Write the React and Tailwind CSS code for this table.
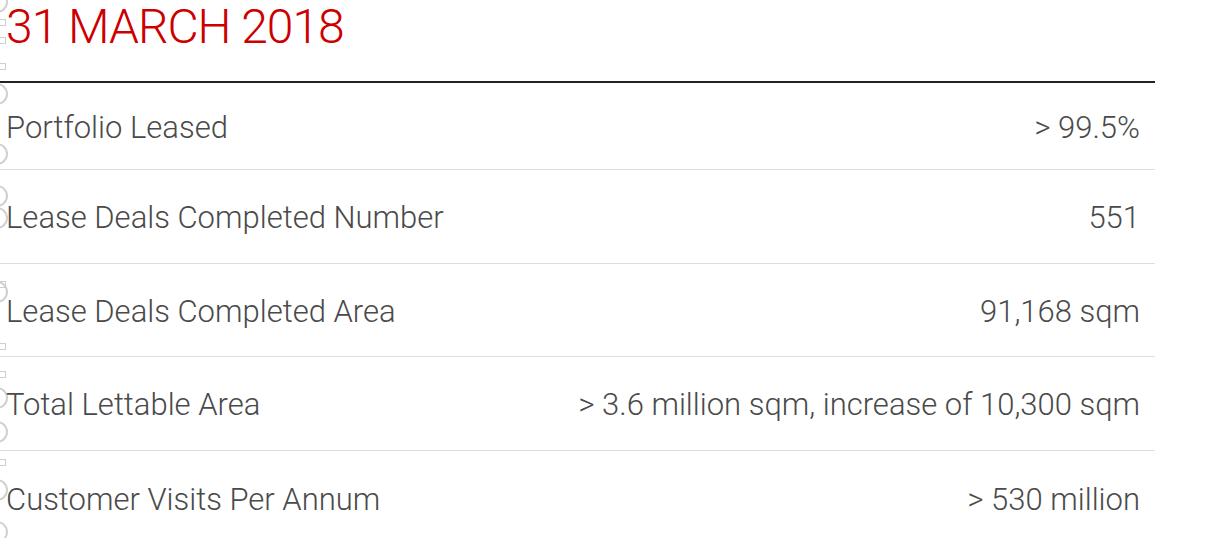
const ROWS = [
  { label: 'Portfolio Leased', value: '> 99.5%', h: 'h-[87px]' },
  { label: 'Lease Deals Completed Number', value: '551', h: 'h-[94px]' },
  { label: 'Lease Deals Completed Area', value: '91,168 sqm', h: 'h-[93px]' },
  { label: 'Total Lettable Area', value: '> 3.6 million sqm, increase of 10,300 sqm', h: 'h-[94px]' },
  { label: 'Customer Visits Per Annum', value: '> 530 million', h: 'h-[94px]' },
];

// restos de controles de formulario que asoman por el borde izquierdo
const GHOST_CIRCLES = [2, 94, 154, 196, 218, 292, 398, 432, 490, 532];
const GHOST_SQUARES = [22, 40, 66, 284, 346, 374, 462];

export default function App() {
  return (
    <div className="relative w-[1213px] h-[538px] overflow-hidden bg-white font-['Roboto',sans-serif]">
      {GHOST_CIRCLES.map(y => (
        <div
          key={'c' + y}
          className="absolute left-[-14px] w-[22px] h-[22px] rounded-full border-2 border-[#d0d0d0]"
          style={{ top: y - 11 }}
        />
      ))}
      {GHOST_SQUARES.map(y => (
        <div
          key={'s' + y}
          className="absolute left-[-2px] w-[8px] h-[7px] border border-[#cfcfcf]"
          style={{ top: y - 3 }}
        />
      ))}

      <div className="relative w-[1155px]">
        <h1 className="h-[81px] pl-[6px] pt-[2px] text-[48px] leading-[50px] font-light text-[#cc0000] tracking-[-1px]">
          31 MARCH 2018
        </h1>
        <div className="h-[2px] bg-[#222]" />
        {ROWS.map((row, i) => (
          <div
            key={row.label}
            className={`${row.h} flex items-center justify-between pt-[4px] pl-[6px] pr-[15px] text-[31px] font-light text-[#4a4a4a] ${i < ROWS.length - 1 ? 'border-b border-[#dedede]' : ''}`}
          >
            <span>{row.label}</span>
            <span>{row.value}</span>
          </div>
        ))}
      </div>
    </div>
  );
}
